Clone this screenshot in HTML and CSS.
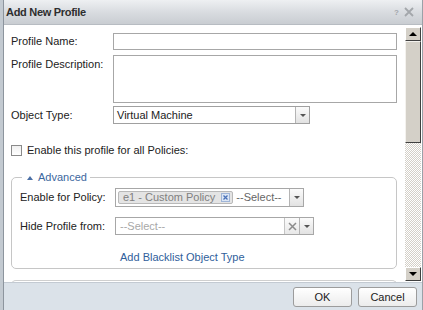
FILE: index.html
```html
<!DOCTYPE html>
<html lang="en">
<head>
    <meta charset="UTF-8">
    <title>Add New Profile</title>
    <link rel="stylesheet" href="styles.css">
</head>
<body>
    <div class="dialog">
        <div class="dialog-title">
            <span class="dialog-title-text">Add New Profile</span>
            <span class="dialog-tools">
                <span class="tool-help">?</span>
                <svg class="tool-close" width="10" height="10" viewBox="0 0 10 10">
                    <path d="M1 1L9 9M9 1L1 9" stroke="#a3a7ab" stroke-width="1.8" fill="none"/>
                </svg>
            </span>
        </div>

        <div class="dialog-body">
            <div class="dialog-content">
                <div class="form-row">
                    <label class="form-label">Profile Name:</label>
                    <div class="text-input"></div>
                </div>

                <div class="form-row form-row-top">
                    <label class="form-label form-label-top">Profile Description:</label>
                    <div class="text-area"></div>
                </div>

                <div class="form-row form-row-tight">
                    <label class="form-label">Object Type:</label>
                    <div class="select-box">
                        <span class="select-value">Virtual Machine</span>
                        <span class="select-arrow"><i class="caret"></i></span>
                    </div>
                </div>

                <div class="check-row">
                    <span class="checkbox"></span>
                    <span>Enable this profile for all Policies:</span>
                </div>

                <fieldset class="advanced">
                    <legend class="advanced-legend"><i class="caret-up"></i>Advanced</legend>

                    <div class="adv-row">
                        <label class="adv-label">Enable for Policy:</label>
                        <div class="multi-select">
                            <span class="token">e1 - Custom Policy<span class="token-remove">
                                <svg width="7" height="7" viewBox="0 0 7 7"><path d="M1.5 1.5L5.5 5.5M5.5 1.5L1.5 5.5" stroke="#4a72b8" stroke-width="1.3"/></svg>
                            </span></span>
                            <span class="multi-placeholder">--Select--</span>
                            <span class="select-arrow"><i class="caret"></i></span>
                        </div>
                    </div>

                    <div class="adv-row adv-row-second">
                        <label class="adv-label">Hide Profile from:</label>
                        <div class="combo-box">
                            <span class="combo-placeholder">--Select--</span>
                            <span class="combo-clear">
                                <svg width="9" height="9" viewBox="0 0 9 9"><path d="M1 1L8 8M8 1L1 8" stroke="#8c8c8c" stroke-width="1.5"/></svg>
                            </span>
                            <span class="select-arrow"><i class="caret"></i></span>
                        </div>
                    </div>

                    <div class="adv-link-row">
                        <a class="adv-link" href="#">Add Blacklist Object Type</a>
                    </div>
                </fieldset>

                <div class="next-section"></div>
            </div>

            <div class="scrollbar">
                <div class="scroll-btn"><i class="scroll-caret-up"></i></div>
                <div class="scroll-thumb"></div>
                <div class="scroll-track"></div>
                <div class="scroll-btn"><i class="scroll-caret-down"></i></div>
            </div>
        </div>

        <div class="dialog-footer">
            <button class="btn">OK</button>
            <button class="btn">Cancel</button>
        </div>
    </div>
</body>
</html>
```

FILE: styles.css
```css
* {
    margin: 0;
    padding: 0;
    box-sizing: border-box;
}

body {
    font-family: "Liberation Sans", Arial, sans-serif;
    font-size: 11px;
    line-height: 13px;
    color: #222;
    background: #c3cad1;
    width: 423px;
    height: 310px;
    overflow: hidden;
}

/* Dialog frame */
.dialog {
    margin-left: 3px;
    width: 420px;
    height: 310px;
    border-left: 1px solid #8d959e;
    border-right: 1px solid #9aa1a8;
    display: flex;
    flex-direction: column;
    background: #fff;
    overflow: hidden;
}

.dialog-title {
    height: 25px;
    flex-shrink: 0;
    display: flex;
    align-items: center;
    justify-content: space-between;
    padding: 0 8px 0 2px;
    background: linear-gradient(#eef0f2 0%, #d9dce0 50%, #c9cdd2 100%);
    border-bottom: 1px solid #b7bcc2;
}

.dialog-title-text {
    font-weight: bold;
    color: #2e2e2e;
    letter-spacing: -0.3px;
}

.dialog-tools {
    display: flex;
    align-items: center;
    gap: 5px;
}

.tool-help {
    font-size: 8px;
    color: #a3a7ab;
    font-weight: bold;
}

/* Body */
.dialog-body {
    flex: 1;
    display: flex;
    min-height: 0;
}

.dialog-content {
    flex: 1;
    padding: 8px 8px 0 7px;
    overflow: hidden;
}

.form-row {
    display: flex;
    align-items: center;
    margin-bottom: 5px;
}

.form-row-top {
    align-items: flex-start;
    margin-bottom: 3px;
}

.form-row-tight {
    margin-bottom: 0;
}

.form-label {
    width: 102px;
    flex-shrink: 0;
}

.form-label-top {
    padding-top: 3px;
}

.text-input {
    flex: 1;
    height: 17px;
    border: 1px solid #a7a7a7;
}

.text-area {
    flex: 1;
    height: 48px;
    border: 1px solid #a7a7a7;
}

.select-box {
    width: 197px;
    height: 18px;
    border: 1px solid #a0a0a0;
    display: flex;
    align-items: stretch;
}

.select-value {
    flex: 1;
    padding: 2px 3px 0;
    color: #222;
}

.select-arrow {
    width: 14px;
    flex-shrink: 0;
    border-left: 1px solid #b4b4b4;
    background: linear-gradient(#fbfbfb, #e2e2e2);
    display: flex;
    align-items: center;
    justify-content: center;
}

.caret {
    width: 0;
    height: 0;
    border-left: 3px solid transparent;
    border-right: 3px solid transparent;
    border-top: 3px solid #555;
}

/* Checkbox row */
.check-row {
    display: flex;
    align-items: center;
    gap: 5px;
    margin-top: 20px;
}

.checkbox {
    width: 11px;
    height: 11px;
    border: 1px solid #8a8a8a;
    background: linear-gradient(#f0f0f0, #fff);
}

/* Advanced fieldset */
.advanced {
    margin-top: 14px;
    border: 1px solid #c6c6c6;
    border-radius: 5px;
    padding: 4px 8px 4px 8px;
}

.advanced-legend {
    margin-left: 2px;
    padding: 0 3px 0 5px;
    color: #3b679e;
    display: flex;
    align-items: center;
}

.caret-up {
    width: 0;
    height: 0;
    margin-right: 5px;
    border-left: 3px solid transparent;
    border-right: 3px solid transparent;
    border-bottom: 4px solid #4a6fa5;
}

.adv-row {
    display: flex;
    align-items: center;
}

.adv-row-second {
    margin-top: 10px;
}

.adv-label {
    width: 95px;
    flex-shrink: 0;
}

.multi-select {
    width: 189px;
    height: 19px;
    border: 1px solid #a7a7a7;
    display: flex;
    align-items: stretch;
}

.token {
    margin: 2px 0 2px 2px;
    padding: 0 2px 0 4px;
    border: 1px solid #b9b9b9;
    border-radius: 2px;
    background: #e4e4e4;
    color: #808080;
    display: flex;
    align-items: center;
    gap: 6px;
}

.token-remove {
    width: 9px;
    height: 9px;
    border: 1px solid #9fb5d8;
    background: #dce6f5;
    display: flex;
    align-items: center;
    justify-content: center;
}

.multi-placeholder {
    flex: 1;
    padding: 2px 0 0 3px;
    color: #666;
}

.combo-box {
    width: 199px;
    height: 18px;
    border: 1px solid #a7a7a7;
    display: flex;
    align-items: stretch;
}

.combo-placeholder {
    flex: 1;
    padding: 2px 0 0 4px;
    color: #a8a8a8;
}

.combo-clear {
    width: 15px;
    border-left: 1px solid #c4c4c4;
    background: linear-gradient(#fbfbfb, #e8e8e8);
    display: flex;
    align-items: center;
    justify-content: center;
}

.adv-link-row {
    margin-top: 16px;
    padding-left: 100px;
}

.adv-link {
    color: #2f609b;
    text-decoration: none;
}

.next-section {
    margin-top: 11px;
    height: 20px;
    border: 1px solid #cfcfcf;
    border-bottom: none;
    border-radius: 5px 5px 0 0;
}

/* Scrollbar */
.scrollbar {
    width: 16px;
    flex-shrink: 0;
    margin: 2px 1px 1px 0;
    display: flex;
    flex-direction: column;
}

.scroll-btn {
    height: 14px;
    background: #d4d0c8;
    border: 1px solid;
    border-color: #fff #404040 #404040 #fff;
    display: flex;
    align-items: center;
    justify-content: center;
}

.scroll-caret-up {
    width: 0;
    height: 0;
    border-left: 4px solid transparent;
    border-right: 4px solid transparent;
    border-bottom: 4px solid #000;
}

.scroll-caret-down {
    width: 0;
    height: 0;
    border-left: 4px solid transparent;
    border-right: 4px solid transparent;
    border-top: 4px solid #000;
}

.scroll-thumb {
    height: 102px;
    background: #d4d0c8;
    border: 1px solid;
    border-color: #f4f2ee #404040 #404040 #f4f2ee;
}

.scroll-track {
    flex: 1;
    background: repeating-conic-gradient(#d4d0c8 0 25%, #fff 0 50%) 0 0 / 2px 2px;
}

/* Footer */
.dialog-footer {
    height: 28px;
    flex-shrink: 0;
    background: #dbe2e9;
    border-top: 1px solid #c3cad2;
    display: flex;
    justify-content: flex-end;
    align-items: flex-start;
    gap: 6px;
    padding: 4px 5px 0 0;
}

.btn {
    width: 59px;
    height: 20px;
    font-family: inherit;
    font-size: 11px;
    color: #222;
    border: 1px solid #9c9c9c;
    border-radius: 3px;
    background: linear-gradient(#ffffff, #ececec);
}
```
